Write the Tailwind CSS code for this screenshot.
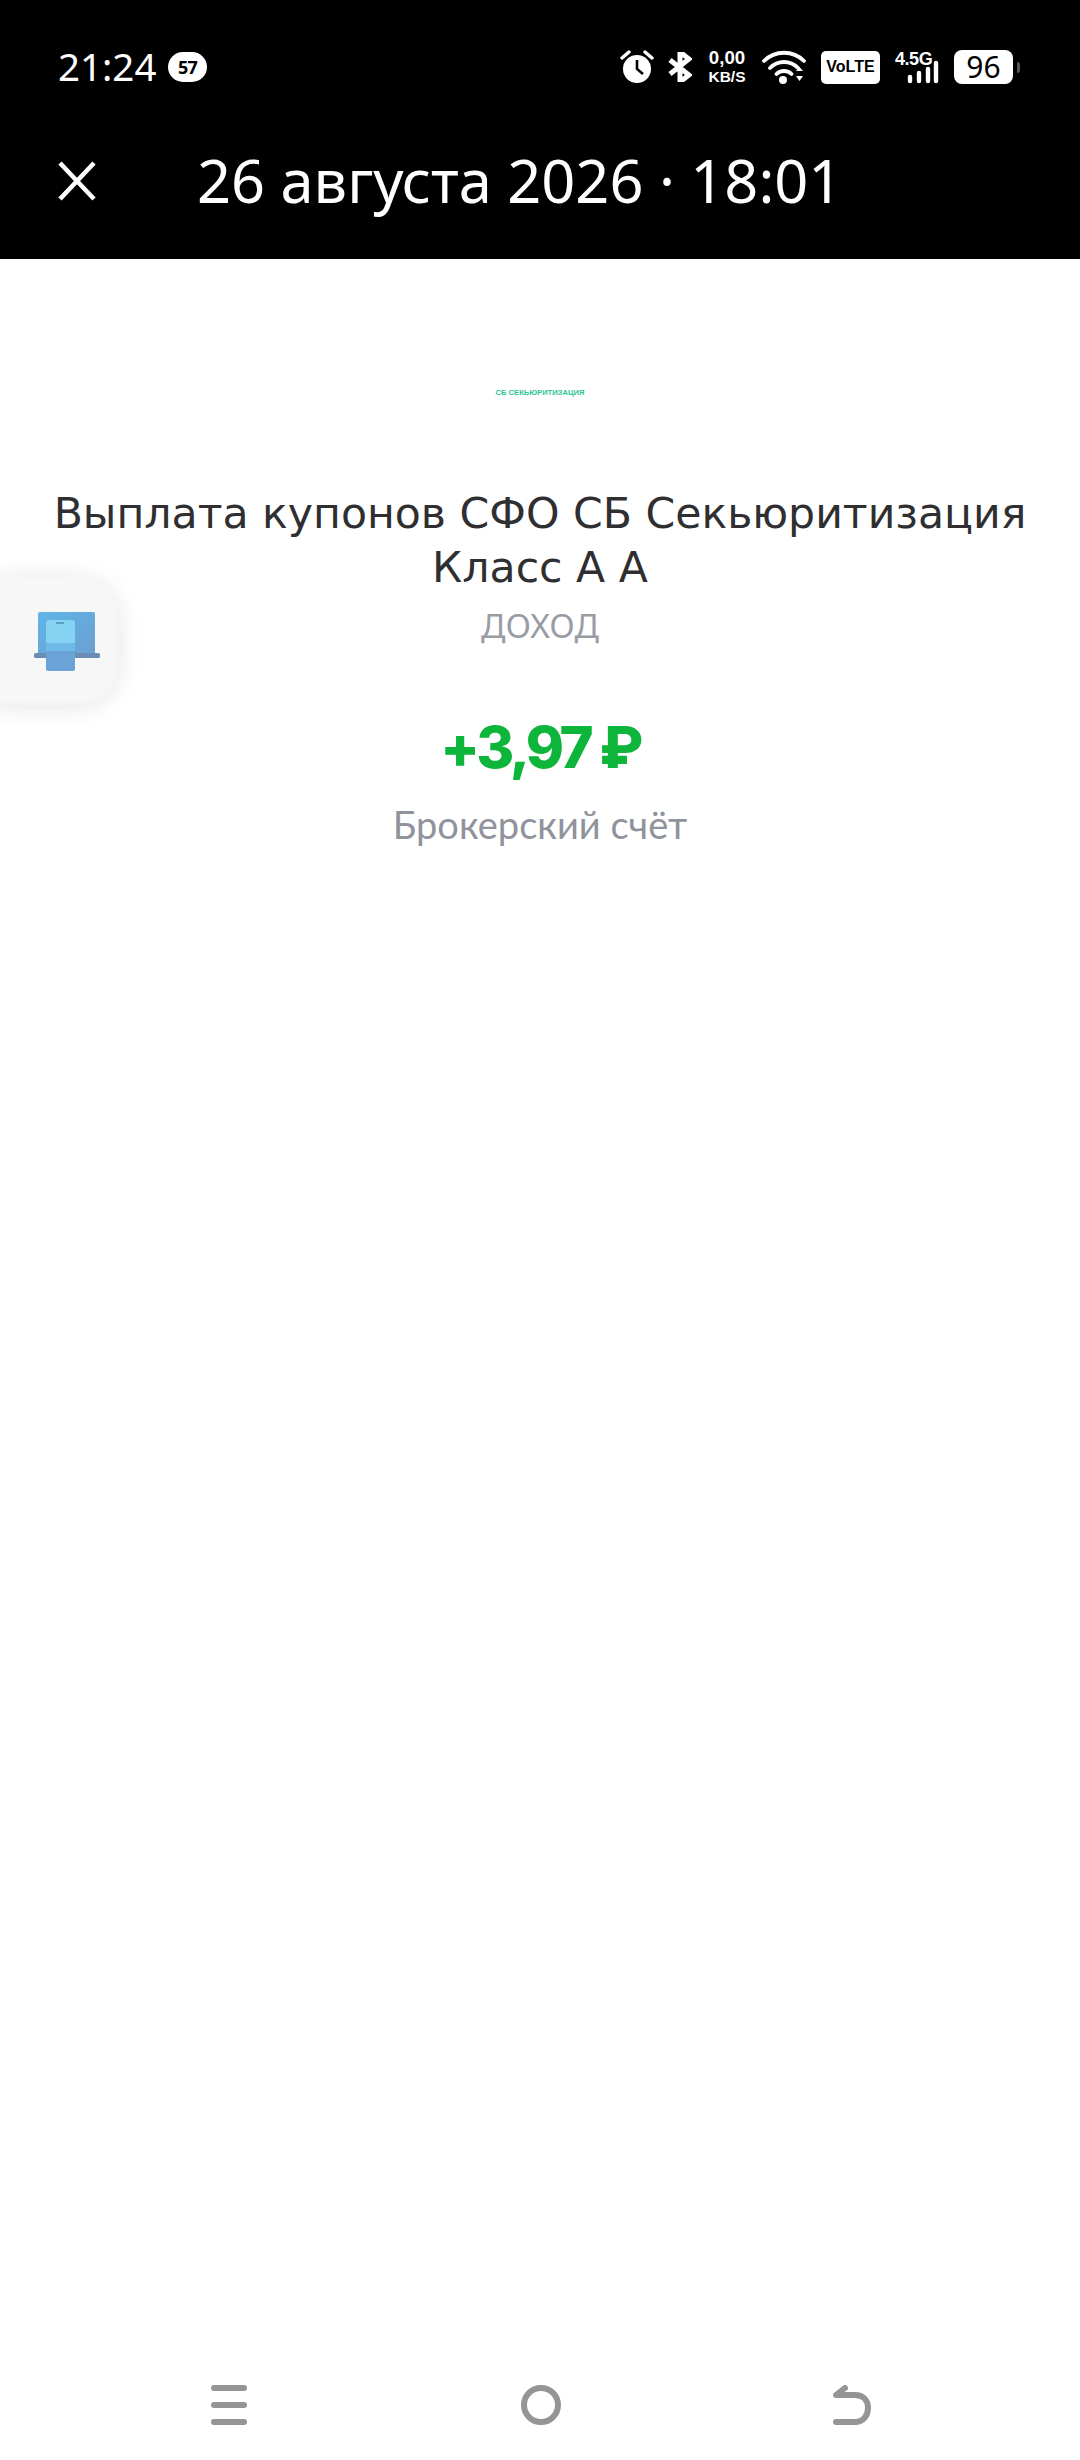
<!doctype html>
<html lang="ru">
<head>
<meta charset="utf-8">
<script src="https://cdn.jsdelivr.net/npm/@tailwindcss/browser@4"></script>
</head>
<body class="bg-white">
<div class="relative w-[1080px] h-[2460px] flex flex-col overflow-hidden bg-white font-['Noto_Sans',sans-serif]">
  <header class="h-[259px] bg-black text-white flex flex-col shrink-0">
    <div class="h-[134px] pl-[58px] flex items-center">
      <span class="text-[38.500px] leading-none w-[110px] -mt-[1px]">21:24</span>
      <span class="w-[39px] h-[30px] rounded-full bg-white text-black text-[18px] font-bold flex items-center justify-center tracking-tighter">57</span>
      <div class="ml-[413px] flex items-center h-[34px]">
        <svg class="w-[34px] h-[34px]" viewBox="0 0 34 34"><circle cx="17" cy="19" r="14" fill="#fff"/><path d="M17 10v9l6 5" stroke="#000" stroke-width="2.600" fill="none"/><path d="M2 8l7-6M32 8l-7-6" stroke="#fff" stroke-width="3.400" stroke-linecap="round"/></svg>
        <svg class="w-[24px] h-[30px] ml-[14px]" viewBox="0 0 24 30"><path d="M2 8l19 15-9 7V0l9 7L2 22" fill="none" stroke="#fff" stroke-width="5"/></svg>
        <div class="ml-[14px] w-[42px] flex flex-col items-center font-bold leading-none font-['Liberation_Sans'] -mt-[1px]">
          <span class="text-[18.700px] h-[20px]">0,00</span>
          <span class="text-[15.500px]">KB/S</span>
        </div>
        <svg class="w-[44px] h-[34px] ml-[14px]" viewBox="0 0 44 34"><path d="M2 11C13 0 31 0 42 11M8 18c8-8 20-8 28 0M14.500 24c4-4 11-4 15 0" fill="none" stroke="#fff" stroke-width="3.800" stroke-linecap="round"/><circle cx="21" cy="30" r="4" fill="#fff"/><path d="M34 21l3.500-4 3.500 4zM34 26h7l-3.500 5z" fill="#fff"/></svg>
        <div class="ml-[15px] w-[59px] h-[33px] rounded-[5px] bg-white text-black text-[16px] font-bold flex items-center justify-center font-['Liberation_Sans']">VoLTE</div>
        <div class="relative ml-[15px] w-[44px] h-[34px]">
          <span class="absolute left-0 top-0 text-[18px] font-bold leading-[18px] tracking-tight font-['Liberation_Sans']">4.5G</span>
          <svg class="absolute left-[12px] top-[10px] w-[32px] h-[24px]" viewBox="0 0 32 24"><path d="M3 21v-4M12 21v-8M21 21V9M29 21V3" stroke="#fff" stroke-width="4.400" stroke-linecap="round"/></svg>
        </div>
        <div class="ml-[15px] w-[59px] h-[34px] rounded-[8px] bg-white text-black text-[30px] leading-none flex items-center justify-center">96</div>
        <div class="ml-[4px] w-[3px] h-[11px] rounded-r-sm bg-[#555]"></div>
      </div>
    </div>
    <div class="h-[96px] pl-[58px] flex items-center -mt-[1px]">
      <svg class="w-[38px] h-[40px] shrink-0" viewBox="0 0 38 40"><path d="M2 2l34 36M36 2L2 38" stroke="#fff" stroke-width="4.600"/></svg>
      <h1 class="ml-[101px] text-[59.500px] leading-none whitespace-nowrap -mt-[2px]">26 августа 2026 · 18:01</h1>
    </div>
  </header>

  <main class="flex-1 flex flex-col items-center">
    <div class="mt-[126px] h-[16px] text-[7.600px] leading-[16px] font-bold text-[#2ec592] font-['Liberation_Sans'] whitespace-nowrap">СБ СЕКЬЮРИТИЗАЦИЯ</div>
    <h2 class="mt-[85px] w-[1040px] text-center text-[42.600px] leading-[54px] text-[#2f2f31] font-['DejaVu_Sans']">Выплата купонов СФО СБ Секьюритизация<br>Класс А А</h2>
    <div class="mt-[9px] text-[33.500px] leading-[44px] text-[#9a9ca5]">ДОХОД</div>
    <div class="mt-[65px] text-[58px] leading-[70px] font-extrabold text-[#0db63a] font-['Inter'] tracking-[-3.500px]">+3,97 ₽</div>
    <div class="mt-[19px] text-[38px] leading-[46px] text-[#90939c] font-['Lato']">Брокерский счёт</div>
  </main>

  <nav class="h-[111px] shrink-0 pt-[36px]">
    <div class="w-[1080px] flex">
      <div class="ml-[211px] w-[36px] flex flex-col gap-[11px]">
        <div class="h-[6px] rounded-full bg-[#959595]"></div>
        <div class="h-[6px] rounded-full bg-[#959595]"></div>
        <div class="h-[6px] rounded-full bg-[#959595]"></div>
      </div>
      <div class="ml-[274px] w-[40px] h-[40px] rounded-full border-[6px] border-[#959595]"></div>
      <svg class="ml-[272px] w-[40px] h-[40px]" viewBox="0 0 40 40"><path d="M3 37h19c8 0 13-6 13-14s-5-13-13-13H3l9-7" fill="none" stroke="#959595" stroke-width="6" stroke-linecap="round" stroke-linejoin="round"/></svg>
    </div>
  </nav>

  <div class="absolute left-[-30px] top-[578px] w-[148px] h-[126px] rounded-[40px] bg-[#f7f7f7] shadow-[0_2px_24px_rgba(0,0,0,0.12)] blur-[2px]"></div>
  <svg class="absolute left-[34px] top-[612px] w-[66px] h-[60px] blur-[0.5px]" viewBox="0 0 66 60"><defs><linearGradient id="lap" x1="0" y1="0" x2="1" y2="1"><stop offset="0" stop-color="#60b5e8"/><stop offset="1" stop-color="#6c9fd0"/></linearGradient></defs><rect x="4" y="0" width="57" height="43" rx="2" fill="url(#lap)"/><rect x="0" y="41" width="66" height="5" rx="1.500" fill="#6b8db3"/><rect x="12" y="8" width="29" height="51" rx="2.500" fill="#6ba2d8"/><path d="M12 10.500a2.500 2.500 0 0 1 2.500-2.500h24a2.500 2.500 0 0 1 2.500 2.500V31H12z" fill="#84d3f3"/><path d="M12 31h29v8H12z" fill="#6fb9e8"/><path d="M22 11h8" stroke="#4f8fb5" stroke-width="1.500"/></svg>
</div>
</body>
</html>
